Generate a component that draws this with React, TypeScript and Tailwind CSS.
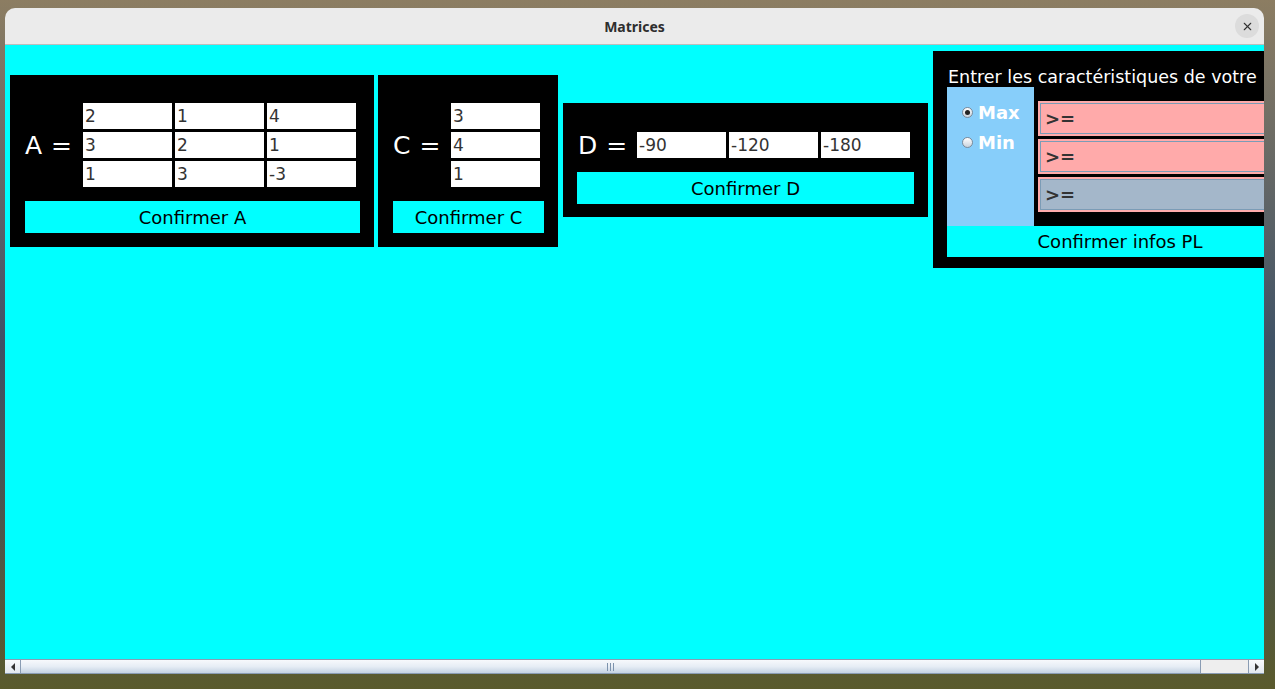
import { X } from "lucide-react";

const matA = [
  ["2", "1", "4"],
  ["3", "2", "1"],
  ["1", "3", "-3"],
];
const matC = ["3", "4", "1"];
const matD = ["-90", "-120", "-180"];

const font = "font-['DejaVu_Sans',sans-serif]";

function Cell({ value }: { value: string }) {
  return (
    <div className="flex h-[26px] w-[89px] items-center bg-white pl-[2px] text-[17px] leading-none text-[#333333]">
      {value}
    </div>
  );
}

function Label({ name }: { name: string }) {
  return (
    <div className="flex w-[58px] shrink-0 items-center gap-[9px] text-[25px] leading-none text-white">
      <span>{name}</span>
      <span>=</span>
    </div>
  );
}

function ConfirmButton({ label }: { label: string }) {
  return (
    <div className="flex h-[32px] items-center justify-center bg-[#00ffff] text-[18px] text-black">
      {label}
    </div>
  );
}

function Radio({ checked, label }: { checked?: boolean; label: string }) {
  return (
    <div className="flex h-[30px] items-center gap-[5px]">
      <span className="grid h-[11px] w-[11px] place-items-center rounded-full border border-[#7c8a99] bg-gradient-to-b from-white to-[#c9d3dd]">
        {checked && <span className="h-[5px] w-[5px] rounded-full bg-[#222]" />}
      </span>
      <span className="text-[18px] font-bold text-white">{label}</span>
    </div>
  );
}

function Constraint({ grey }: { grey?: boolean }) {
  return (
    <div className="h-[35px] w-[240px] bg-[#ffaaaa] p-[2px]">
      <div
        className={`flex h-full items-center border border-[#7b9cb6] pl-[4px] text-[18px] font-bold text-[#333] ${
          grey ? "bg-[#a4b7ca]" : "bg-[#ffaaaa]"
        }`}
      >
        &gt;=
      </div>
    </div>
  );
}

export default function App() {
  return (
    <div
      className={`h-[689px] w-[1275px] overflow-hidden bg-gradient-to-b from-[#8c7d62] via-[#3f5266] to-[#5a5a2c] pl-[5px] pt-[8px] ${font}`}
    >
      <div className="flex w-[1259px] flex-col overflow-hidden rounded-t-[10px]">
        {/* title bar */}
        <div className="relative flex h-[37px] items-center justify-center border-b border-[#bdbdbd] bg-[#ebebeb]">
          <span className="font-['Noto_Sans',sans-serif] text-[14px] font-bold text-[#2e2e2e]">Matrices</span>
          <div className="absolute right-[5px] top-[6px] grid h-[24px] w-[24px] place-items-center rounded-full bg-[#dcdcdc]">
            <X className="h-[13px] w-[13px] text-[#333]" strokeWidth={2} />
          </div>
        </div>

        {/* content */}
        <div className="flex h-[614px] items-start gap-[4px] overflow-hidden bg-[#00ffff] pl-[5px]">
          {/* A */}
          <div className="mt-[30px] flex h-[172px] w-[364px] shrink-0 flex-col gap-[14px] bg-black pb-[14px] pl-[15px] pr-[14px] pt-[28px]">
            <div className="flex items-center">
              <Label name="A" />
              <div className="grid grid-cols-3 gap-[3px]">
                {matA.flat().map((v, i) => (
                  <Cell key={i} value={v} />
                ))}
              </div>
            </div>
            <ConfirmButton label="Confirmer A" />
          </div>

          {/* C */}
          <div className="mt-[30px] flex h-[172px] w-[180px] shrink-0 flex-col gap-[14px] bg-black pb-[14px] pl-[15px] pr-[14px] pt-[28px]">
            <div className="flex items-center">
              <Label name="C" />
              <div className="flex flex-col gap-[3px]">
                {matC.map((v, i) => (
                  <Cell key={i} value={v} />
                ))}
              </div>
            </div>
            <ConfirmButton label="Confirmer C" />
          </div>

          {/* D */}
          <div className="ml-[1px] mt-[58px] flex h-[114px] w-[365px] shrink-0 flex-col gap-[14px] bg-black px-[14px] pb-[13px] pt-[29px]">
            <div className="flex items-center pl-[1px]">
              <Label name="D" />
              <div className="ml-[1px] flex gap-[3px]">
                {matD.map((v, i) => (
                  <Cell key={i} value={v} />
                ))}
              </div>
            </div>
            <ConfirmButton label="Confirmer D" />
          </div>

          {/* PL */}
          <div className="ml-[1px] mt-[6px] flex h-[217px] w-[400px] shrink-0 flex-col bg-black pl-[14px] pt-[15px]">
            <div className="h-[21px] whitespace-nowrap pl-[1px] text-[17.5px] leading-[22px] text-white">
              Entrer les caractéristiques de votre
            </div>
            <div className="flex h-[139px] gap-[4px]">
              <div className="flex w-[87px] flex-col bg-[#87cefa] pl-[15px] pt-[10px]">
                <Radio checked label="Max" />
                <Radio label="Min" />
              </div>
              <div className="flex flex-col gap-[3px] pt-[14px]">
                <Constraint />
                <Constraint />
                <Constraint grey />
              </div>
            </div>
            <div className="flex h-[31px] w-[332px] items-center justify-center bg-[#00ffff] pl-[14px] text-[18px] text-black">
              Confirmer infos PL
            </div>
          </div>
        </div>

        {/* scrollbar */}
        <div className="flex h-[15px] border-y border-[#8a9cb3] bg-[#eeeeee]">
          <div className="flex w-[16px] items-center justify-center border-r border-[#8a9cb3] bg-gradient-to-b from-[#f8fafc] to-[#e2e8ef]">
            <span className="h-0 w-0 border-y-[4px] border-r-[4px] border-y-transparent border-r-[#333]" />
          </div>
          <div className="flex w-[1180px] items-center justify-center border-r border-[#8a9cb3] bg-gradient-to-b from-[#f7f9fc] via-[#e6edf5] to-[#c4d2e2]">
            <span className="flex gap-[2px]">
              <span className="h-[8px] w-px bg-[#7d93ad]" />
              <span className="h-[8px] w-px bg-[#7d93ad]" />
              <span className="h-[8px] w-px bg-[#7d93ad]" />
            </span>
          </div>
          <div className="flex-1" />
          <div className="flex w-[16px] items-center justify-center border-l border-[#8a9cb3] bg-gradient-to-b from-[#f8fafc] to-[#e2e8ef]">
            <span className="h-0 w-0 border-y-[4px] border-l-[4px] border-y-transparent border-l-[#333]" />
          </div>
        </div>
      </div>
    </div>
  );
}
